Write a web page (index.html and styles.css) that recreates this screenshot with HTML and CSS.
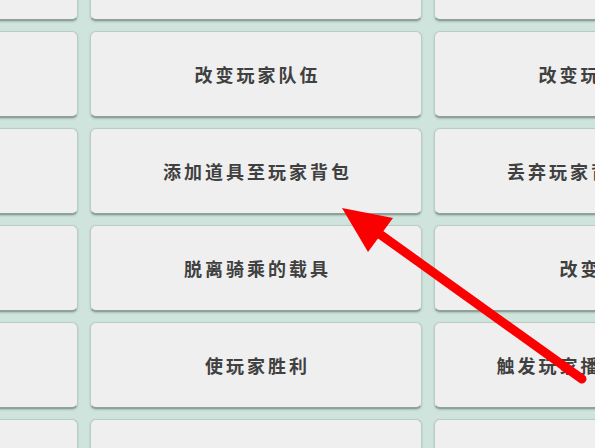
FILE: index.html
```html
<!DOCTYPE html>
<html lang="zh-CN">
<head>
    <meta charset="UTF-8">
    <meta name="viewport" content="width=device-width, initial-scale=1.0">
    <title>触发器动作</title>
    <link rel="stylesheet" href="styles.css">
</head>
<body>
    <div class="screen">
        <div class="actions">
            <button class="action"></button>
            <button class="action"></button>
            <button class="action"></button>

            <button class="action"></button>
            <button class="action">改变玩家队伍</button>
            <button class="action">改变玩家阵营</button>

            <button class="action"></button>
            <button class="action">添加道具至玩家背包</button>
            <button class="action">丢弃玩家背包内道具</button>

            <button class="action"></button>
            <button class="action">脱离骑乘的载具</button>
            <button class="action">改变天气</button>

            <button class="action"></button>
            <button class="action">使玩家胜利</button>
            <button class="action">触发玩家播放指定动画</button>

            <button class="action"></button>
            <button class="action"></button>
            <button class="action"></button>
        </div>

        <svg class="pointer" width="595" height="448" viewBox="0 0 595 448">
            <line x1="374" y1="230" x2="582" y2="379" stroke="#fb0000" stroke-width="9" stroke-linecap="round"/>
            <polygon points="342,208 393,218 368,252" fill="#fb0000"/>
        </svg>
    </div>
</body>
</html>
```

FILE: styles.css
```css
*{
    box-sizing: border-box;
}
html, body{
    margin: 0;
    padding: 0;
}
body{
    background-color: #cfe4dc;
    font-family: "Noto Sans CJK SC", "Noto Sans", sans-serif;
}
.screen{
    position: relative;
    width: 595px;
    height: 448px;
    overflow: hidden;
}
.actions{
    display: grid;
    grid-template-columns: repeat(3, 332px);
    grid-auto-rows: 87px;
    column-gap: 12px;
    row-gap: 10px;
    margin-left: -254px;
    margin-top: -66px;
}
.action{
    background-color: #efefef;
    border: 1px solid #b9cbc3;
    border-bottom: 2px solid #8fa299;
    border-radius: 6px;
    box-shadow: 0 1px 2px rgba(90, 120, 110, 0.35);
    font-family: inherit;
    font-size: 18px;
    font-weight: bold;
    letter-spacing: 3px;
    color: #404040;
    padding: 0;
    padding-left: 3px;
    text-align: center;
}
.pointer{
    position: absolute;
    left: 0;
    top: 0;
}
```
